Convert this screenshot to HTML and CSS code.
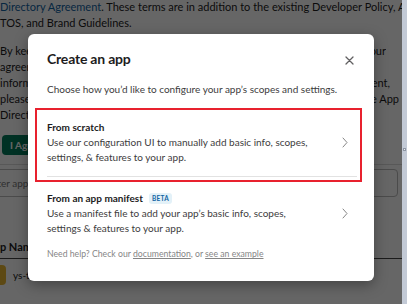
FILE: index.html
```html
<!DOCTYPE html>
<html lang="en">
<head>
<meta charset="utf-8">
<title>Create an app</title>
<link rel="stylesheet" href="styles.css">
</head>
<body>
<div class="page">
  <div class="terms">
    <p class="para first">
      <span class="line"><span class="lead"><a class="link">Directory Agreement</a>. These terms are in addition to the existing Developer Policy, API</span></span>
      <span class="line"><span class="lead">TOS, and Brand Guidelines.</span></span>
    </p>
    <p class="para">
      <span class="line w386"><span class="lead">By keeping this app installed, you agree to the updated terms on behalf of</span><span class="tail">your</span></span>
      <span class="line"><span class="lead">agreement with Slack and the apps you build.</span></span>
      <span class="line w390"><span class="lead">information about these changes, see the Slack App Directory</span><span class="tail">Agreement,</span></span>
      <span class="line w399"><span class="lead">please contact us. If you do not agree, you must remove</span><span class="tail">the App</span></span>
      <span class="line"><span class="lead">Directory listing for your apps.</span></span>
    </p>
    <button class="agree">I Agree</button>
  </div>
  <div class="divider"></div>
  <div class="filter">Filter apps by name or workspace</div>
  <div class="table">
    <div class="thead">App Name</div>
    <div class="trow">
      <span class="appicon"></span>
      <span class="appname">ys-test-app</span>
    </div>
  </div>
</div>

<div class="overlay"></div>
<div class="scrollbar"><span class="thumbmark"></span></div>

<div class="modal">
  <div class="header">
    <h1 class="title">Create an app</h1>
    <button class="close" aria-label="Close">
      <svg width="9" height="9" viewBox="0 0 9 9"><path d="M1 1L8 8M8 1L1 8" stroke="#616061" stroke-width="1.3" stroke-linecap="round" fill="none"/></svg>
    </button>
  </div>
  <p class="subtitle">Choose how you’d like to configure your app’s scopes and settings.</p>
  <div class="options">
    <div class="option">
      <div class="option-text">
        <div class="option-title">From scratch</div>
        <div class="option-desc">Use our configuration UI to manually add basic info, scopes, settings, &amp; features to your app.</div>
      </div>
      <svg class="chev" width="6" height="11" viewBox="0 0 6 11"><path d="M1 1L5 5.5L1 10" stroke="#868686" stroke-width="1" fill="none" stroke-linecap="round" stroke-linejoin="round"/></svg>
    </div>
    <div class="option">
      <div class="option-text">
        <div class="option-title">From an app manifest <span class="beta">BETA</span></div>
        <div class="option-desc">Use a manifest file to add your app’s basic info, scopes, settings &amp; features to your app.</div>
      </div>
      <svg class="chev" width="6" height="11" viewBox="0 0 6 11"><path d="M1 1L5 5.5L1 10" stroke="#868686" stroke-width="1" fill="none" stroke-linecap="round" stroke-linejoin="round"/></svg>
    </div>
  </div>
  <p class="help">Need help? Check our <a class="hlink">documentation</a>, or <a class="hlink">see an example</a></p>
  <div class="highlight"></div>
</div>
</body>
</html>
```

FILE: styles.css
```css
html, body {
  margin: 0;
  padding: 0;
  width: 407px;
  height: 304px;
  overflow: hidden;
}
body {
  font-family: Lato, "Open Sans", sans-serif;
  color: #1d1c1d;
  background: #fff;
  position: relative;
}
.page {
  width: 402px;
}
.terms {
  margin-top: -1px;
}
.para {
  margin: 0 0 12px 0;
  font-size: 11px;
  line-height: 16px;
}
.line {
  display: flex;
  justify-content: space-between;
  white-space: nowrap;
  overflow: hidden;
  width: 420px;
}
.line.w386 { width: 386px; }
.line.w390 { width: 390px; }
.line.w399 { width: 399px; }
.lead { overflow: hidden; }
.tail { flex-shrink: 0; margin-left: 4px; }
.link { color: #1264a3; }
.agree {
  display: block;
  margin: 5px 0 0 2px;
  height: 20px;
  padding: 0 10px 0 8px;
  border: 0;
  border-radius: 4px;
  background: #007a5a;
  color: #fff;
  font: bold 10px Lato, sans-serif;
}
.divider {
  margin-top: 9px;
  height: 1px;
  background: #ddd;
}
.filter {
  margin: 4px 4px 0 -22px;
  height: 26px;
  border: 1px solid #bbb;
  border-radius: 4px;
  padding-left: 8px;
  font-size: 10px;
  line-height: 26px;
  color: #777;
  white-space: nowrap;
}
.table {
  margin: 42px 0 0 -14px;
}
.thead {
  font-size: 11px;
  font-weight: bold;
  line-height: 16px;
  padding-bottom: 3px;
  border-bottom: 1px solid #444;
}
.trow {
  display: flex;
  align-items: center;
  gap: 7px;
  padding-top: 6px;
}
.appicon {
  width: 20px;
  height: 20px;
  border-radius: 4px;
  background: linear-gradient(90deg, #2b5da8 0 40%, #e8b630 40% 100%);
}
.appname {
  font-size: 10px;
}
.overlay {
  position: absolute;
  inset: 0;
  background: rgba(0, 0, 0, 0.6);
}
.scrollbar {
  position: absolute;
  top: 0;
  right: 0;
  width: 5px;
  height: 304px;
  background: #c3cad6;
}
.thumbmark {
  position: absolute;
  top: 148px;
  left: 1px;
  width: 3px;
  height: 3px;
  border: 1px solid #8d95a3;
  background: #eef1f5;
  box-sizing: border-box;
}
.modal {
  position: absolute;
  top: 34px;
  left: 28px;
  width: 346px;
  box-sizing: border-box;
  padding: 15px 17px 20px 19px;
  background: #fff;
  border-radius: 6px;
  box-shadow: 0 4px 14px rgba(0, 0, 0, 0.35);
}
.header {
  display: flex;
  justify-content: space-between;
  align-items: center;
  height: 20px;
}
.title {
  margin: 0;
  font-size: 14px;
  line-height: 20px;
  font-weight: 700;
  letter-spacing: -0.2px;
}
.close {
  width: 16px;
  height: 16px;
  padding: 0;
  border: 0;
  background: none;
  display: flex;
  align-items: center;
  justify-content: center;
  margin-top: 2px;
}
.subtitle {
  margin: 13px 0 0 0;
  font-size: 10px;
  line-height: 15px;
  color: #3d3c3d;
}
.options {
  margin-top: 9px;
}
.option {
  display: flex;
  align-items: center;
  padding: 14px 0 11px 0;
}
.option + .option {
  border-top: 1px solid #e2e2e2;
}
.option-text {
  flex: 1;
}
.option-title {
  font-size: 10px;
  font-weight: bold;
  line-height: 15px;
  display: flex;
  align-items: center;
}
.option-desc {
  font-size: 10px;
  line-height: 15px;
  color: #3d3c3d;
  width: 270px;
}
.chev {
  margin: 0 9px 0 6px;
  flex-shrink: 0;
}
.beta {
  margin-left: 6px;
  padding: 0 3px;
  height: 11px;
  line-height: 11px;
  font-size: 6.5px;
  font-weight: bold;
  letter-spacing: 0.3px;
  color: #1264a3;
  background: #e3f1f8;
  border-radius: 3px;
}
.help {
  margin: 0;
  font-size: 8.7px;
  line-height: 14px;
  color: #868686;
}
.hlink {
  color: #868686;
  text-decoration: underline;
}
.highlight {
  position: absolute;
  left: 7px;
  top: 74px;
  width: 327px;
  height: 74px;
  box-sizing: border-box;
  border: 2px solid #e8212e;
  pointer-events: none;
}
```
